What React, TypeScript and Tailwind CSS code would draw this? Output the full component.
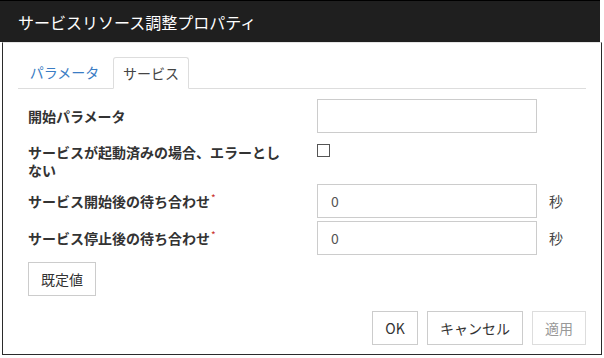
import React from "react";

const font = { fontFamily: '"Noto Sans CJK JP", "Noto Sans", sans-serif' };

function Req() {
  return <span className="text-[#c9302c] text-[10px] font-normal align-top relative -top-[3px] ml-[1px]">*</span>;
}

export default function App() {
  return (
    <div className="w-[604px] h-[358px] bg-white text-[#333]" style={font}>
      <div className="w-[600px] h-[42px] bg-[#1f1f1f] border-t border-black flex items-center pl-[18px]">
        <span className="text-white text-[16px] leading-none">サービスリソース調整プロパティ</span>
      </div>
      <div className="ml-[2px] w-[600px] h-[313px] border-l border-r border-b border-[#2b2b2b] border-t border-t-[#e5e5e5] px-[15px] pt-[14px] flex flex-col">
        {/* tabs */}
        <div className="flex h-[32px] border-b border-[#dddddd] text-[14px]">
          <div className="w-[93px] mr-[2px] flex items-center justify-center text-[#3a7cc4]">パラメータ</div>
          <div className="w-[76px] -mb-[1px] flex items-center justify-center bg-white border border-[#dddddd] border-b-white rounded-t-[3px] text-[#444]">サービス</div>
        </div>
        {/* form */}
        <div className="px-[10px] pt-[10px] text-[14px]">
          <div className="flex items-center h-[34px]">
            <div className="w-[289px] font-bold leading-[18px]">開始パラメータ</div>
            <div className="w-[220px] h-[34px] border border-[#cccccc]" />
          </div>
          <div className="flex items-start mt-[10px]">
            <div className="w-[289px] font-bold leading-[18px]">
              <div className="w-[258px]">サービスが起動済みの場合、エラーとしない</div>
            </div>
            <div className="w-[13px] h-[13px] border border-[#555] mt-[1px]" />
          </div>
          <div className="flex items-center h-[34px] mt-[5px]">
            <div className="w-[289px] font-bold leading-[18px]">サービス開始後の待ち合わせ<Req /></div>
            <div className="w-[220px] h-[34px] border border-[#cccccc] flex items-center pl-[13px] text-[#555]">0</div>
            <div className="ml-[12px] text-[#444]">秒</div>
          </div>
          <div className="flex items-center h-[34px] mt-[3px]">
            <div className="w-[289px] font-bold leading-[18px]">サービス停止後の待ち合わせ<Req /></div>
            <div className="w-[220px] h-[34px] border border-[#cccccc] flex items-center pl-[13px] text-[#555]">0</div>
            <div className="ml-[12px] text-[#444]">秒</div>
          </div>
          <div className="mt-[7px]">
            <div className="w-[68px] h-[34px] border border-[#cccccc] flex items-center justify-center">既定値</div>
          </div>
        </div>
        <div className="flex justify-end gap-[9px] mt-[15px] text-[14px]">
          <div className="w-[46px] h-[34px] border border-[#cccccc] flex items-center justify-center">OK</div>
          <div className="w-[96px] h-[34px] border border-[#cccccc] flex items-center justify-center">キャンセル</div>
          <div className="w-[54px] h-[34px] border border-[#dddddd] flex items-center justify-center text-[#999]">適用</div>
        </div>
      </div>
    </div>
  );
}
